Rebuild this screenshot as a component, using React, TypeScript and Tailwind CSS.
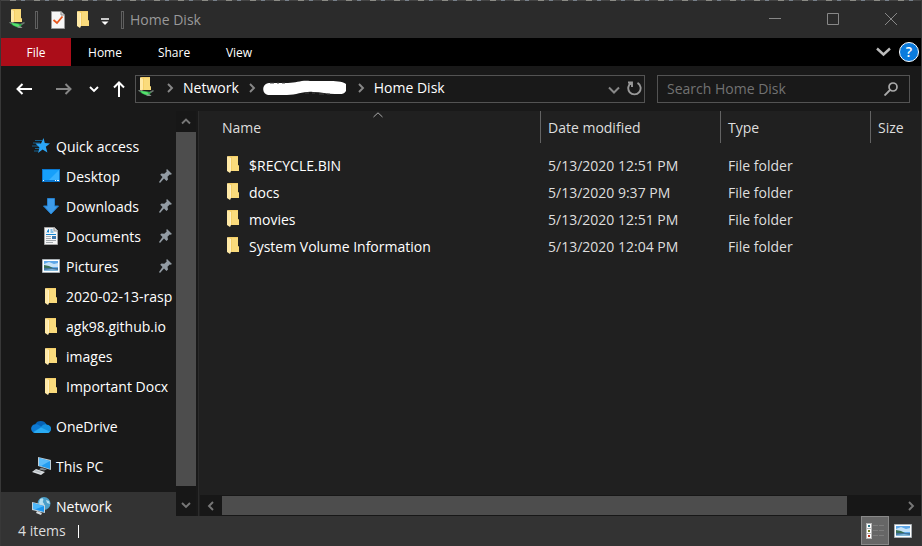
import type { ReactNode } from "react";

function Folder() {
  return (
    <svg width="12" height="17" viewBox="0 0 12 17" className="shrink-0" aria-hidden="true">
      <path d="M1 0h10v9l1 1v5H3z" fill="#f5cf68" />
      <path d="M5 1h6v8l1 1v5H5z" fill="#fadb7c" />
      <path d="M0 0l4 2v12l-1 3-3-2z" fill="#ffe9a6" />
      <path d="M3 2l1 0v12l-1 3z" fill="#fff1c4" />
    </svg>
  );
}

function SharedFolder() {
  return (
    <svg width="16" height="20" viewBox="0 0 16 20" className="shrink-0" aria-hidden="true">
      <path d="M3 0h9v9l1 1v3H4z" fill="#f5cf68" />
      <path d="M6 1h6v8l1 1v3H6z" fill="#fadb7c" />
      <path d="M2 0l3 2v10l-1 2-2-1z" fill="#ffe9a6" />
      <path d="M0 13l2 0 9 2 4-2 1 1-3 2H5L1 14.500z" fill="#6d7a72" />
      <path d="M2 14l9 .8 2 .7-1 1.700L10 19 6 17.500 3 16z" fill="#2ea84b" />
      <path d="M2.500 14l7 1.200 1.500 2.300-1.500.8-5-2z" fill="#55e36d" />
      <path d="M8 18l2-1 3.500 1.200-1 .8H10z" fill="#8a948e" />
    </svg>
  );
}

function Check() {
  return (
    <svg width="14" height="18" viewBox="0 0 14 18" aria-hidden="true">
      <path d="M.5.5h9.500l3.500 3.500v13.500H.5z" fill="#f7f7f7" stroke="#999" />
      <path d="M10 .5V4h3.500" fill="#ddd" stroke="#888" />
      <path d="M2.500 9l3.500 3 5.500-6.500" fill="none" stroke="#e8561c" strokeWidth="1.800" />
    </svg>
  );
}

function Star() {
  return (
    <svg width="18" height="16" viewBox="0 0 18 16" aria-hidden="true">
      <path d="M3 2.500h7M1 5h7M0 8h6M3 10.500h4M2 13h4" stroke="#14608f" />
      <path d="M11.500 0l1.300 5L18 5.500l-4.200 3.300 1.600 5.700-4.800-3L6 15l1.400-5.400L3.500 5.500H9z" fill="#2ba6f7" />
    </svg>
  );
}

function Desktop() {
  return (
    <svg width="18" height="14" viewBox="0 0 18 14" aria-hidden="true">
      <path d="M0 0h18v13H0z" fill="#0b78d0" />
      <path d="M1 1h16v10H1z" fill="#16a0fb" />
      <path d="M17 1v10H7z" fill="#38b2ff" />
      <path d="M1 11.500h1M13 11.500h1M15 11.500h2" stroke="#fff" />
    </svg>
  );
}

function Download() {
  return (
    <svg width="16" height="17" viewBox="0 0 16 17" aria-hidden="true">
      <path d="M4.500.5h7V8h4L8 16 .5 8h4z" fill="#3d9be9" stroke="#2480ce" />
    </svg>
  );
}

function Document() {
  return (
    <svg width="14" height="18" viewBox="0 0 14 18" aria-hidden="true">
      <path d="M.5.5h10l3 3v14H.5z" fill="#f5f6f7" stroke="#a5a5a5" />
      <path d="M10 .5V4h3.500" fill="#ddd" stroke="#999" />
      <path d="M3 5.500l1.500-3v3M6.500 3h2M6.500 5h3M2 7.500h10" fill="none" stroke="#1685cf" />
      <path d="M2 9.500h5M2 11.500h5M2 13.500h10M2 15.500h7" stroke="#a3a9ad" />
      <path d="M8 9h4v3H8z" fill="#3c78ae" />
    </svg>
  );
}

function Picture() {
  return (
    <svg width="18" height="14" viewBox="0 0 18 14" className="shrink-0" aria-hidden="true">
      <path d="M.5.5h17v13H.5z" fill="#fff" stroke="#a9b0b5" />
      <path d="M2 2h14v10H2z" fill="#5ea7e8" />
      <path d="M2 5l5-2 5 2 4-1v4H2z" fill="#c6e3f8" />
      <path d="M2 6l5 1 4 2h5v1H2z" fill="#3a7158" />
      <path d="M2 9h14v3H2z" fill="#41739b" />
      <path d="M2 11l8-1 6 1v1H2z" fill="#82b9dc" />
    </svg>
  );
}

function Cloud() {
  return (
    <svg width="20" height="13" viewBox="0 0 20 13" aria-hidden="true">
      <path d="M4 4.500A6.500 6.500 0 0 1 15.500 4.500L10 9z" fill="#0663b7" />
      <path d="M4.500 4.200c1.500 0 3 .4 4 1.200l7 4-11 3.600A4.400 4.400 0 0 1 4.500 4.200z" fill="#0d7ad4" />
      <path d="M10 7c2-3 4.500-3 6-2.300A4.100 4.100 0 0 1 16 13H4l-2-1z" fill="#1490df" />
      <path d="M10 7.500l9 4.200A4 4 0 0 1 16 13H4.500l-2-.8z" fill="#2aabf3" />
    </svg>
  );
}

function Computer() {
  return (
    <svg width="19" height="18" viewBox="0 0 19 18" aria-hidden="true">
      <path d="M6 0l13 3v10L6 9z" fill="#bfcdd6" />
      <path d="M7 1l11 3v8L7 8.500z" fill="#249df0" />
      <path d="M7 1l11 3-9 5-2-.5z" fill="#5bbcfa" />
      <path d="M9 10.500l6 2-3 1-5-1z" fill="#7f8a91" />
      <path d="M4 12l9 3-4 3-9-3z" fill="#d8dcdf" />
      <path d="M3 13l7 2-2 1-6-2z" fill="#b5bcc0" />
    </svg>
  );
}

function NetworkIcon() {
  return (
    <svg width="19" height="18" viewBox="0 0 19 18" aria-hidden="true">
      <circle cx="12" cy="6.500" r="6.500" fill="#4b9fc9" />
      <path d="M8 2c3-2 4 0 3 2s2 2 1 4-4 0-5-2zM14 3l3 1 1 3-3-1z" fill="#b5dfef" />
      <path d="M0 5l13 3v8L0 13z" fill="#c4d4dd" />
      <path d="M1 6l11 3v6L1 12z" fill="#1b94ec" />
      <path d="M1 6l11 3-8 3-3 0z" fill="#4db8fa" />
      <path d="M5 14l5 2-1 2-5-2z" fill="#d6dcdf" />
    </svg>
  );
}

function Pin() {
  return (
    <svg width="13" height="14" viewBox="0 0 13 14" className="mb-0.5 shrink-0" aria-hidden="true">
      <path d="M8 0l5 5-1.500.7-.8-.3-2.200 2.300.5 2.800L7.500 12 5 9.500 1 14l-1-1 3.500-5L1.200 5.700 2.500 4.500l2.800.2L7.700 2.400 7.300 1z" fill="#929ba3" />
    </svg>
  );
}

function Chevron({ d, className = "" }: { d: "up" | "down" | "left" | "right"; className?: string }) {
  const paths = { up: "M1 6.500l4-4 4 4", down: "M1 3l4 4 4-4", left: "M7 1L3 5l4 4", right: "M3 1l4 4-4 4" };
  return (
    <svg width="10" height="10" viewBox="0 0 10 10" className={"shrink-0 " + className} aria-hidden="true">
      <path d={paths[d]} fill="none" stroke="currentColor" strokeWidth="1.900" />
    </svg>
  );
}

function Arrow({ className }: { className: string }) {
  return (
    <svg width="16" height="12" viewBox="0 0 16 12" className={className} aria-hidden="true">
      <path d="M16 6H2M6.500 1l-5 5 5 5" fill="none" stroke="currentColor" strokeWidth="2" />
    </svg>
  );
}

type Item = { label: string; icon: ReactNode; pinned?: boolean };

const quickItems: Item[] = [
  { label: "Desktop", icon: <Desktop />, pinned: true },
  { label: "Downloads", icon: <Download />, pinned: true },
  { label: "Documents", icon: <Document />, pinned: true },
  { label: "Pictures", icon: <Picture />, pinned: true },
  { label: "2020-02-13-rasp", icon: <Folder /> },
  { label: "agk98.github.io", icon: <Folder /> },
  { label: "images", icon: <Folder /> },
  { label: "Important Docx", icon: <Folder /> },
];

const files = [
  { name: "$RECYCLE.BIN", date: "5/13/2020 12:51 PM" },
  { name: "docs", date: "5/13/2020 9:37 PM" },
  { name: "movies", date: "5/13/2020 12:51 PM" },
  { name: "System Volume Information", date: "5/13/2020 12:04 PM" },
];

function RootItem({ label, icon, selected = false }: { label: string; icon: ReactNode; selected?: boolean }) {
  return (
    <button className={"flex h-[30px] w-full shrink-0 items-center text-left " + (selected ? "bg-[#333]" : "")}>
      <span className="ml-[30px] flex w-5 shrink-0 justify-center pb-0.5">{icon}</span>
      <span className="ml-[5px] whitespace-nowrap">{label}</span>
    </button>
  );
}

function Sidebar() {
  return (
    <nav aria-label="Folders" className="flex w-[198px] shrink-0 border-r border-[#2b2b2b] bg-[#191919]">
      <div className="flex min-w-0 flex-1 flex-col overflow-hidden pt-[21px]">
        <RootItem label="Quick access" icon={<Star />} />
        {quickItems.map((item) => (
          <button key={item.label} className="flex h-[30px] w-full shrink-0 items-center pr-1 text-left">
            <span className="ml-10 flex w-5 shrink-0 justify-center pb-0.5">{item.icon}</span>
            <span className="ml-[5px] flex-1 whitespace-nowrap">{item.label}</span>
            {item.pinned && <Pin />}
          </button>
        ))}
        <div className="flex flex-col gap-[10px] pt-[10px]">
          <RootItem label="OneDrive" icon={<Cloud />} />
          <RootItem label="This PC" icon={<Computer />} />
          <RootItem label="Network" icon={<NetworkIcon />} selected />
        </div>
      </div>
      <div className="mr-[2px] flex w-5 shrink-0 flex-col bg-[#171717] text-[#777]">
        <button aria-label="Scroll up" className="flex h-[21px] items-center justify-center"><Chevron d="up" /></button>
        <div className="flex-1 bg-[#4d4d4d]" />
        <button aria-label="Scroll down" className="flex h-[30px] items-center justify-center pt-2"><Chevron d="down" /></button>
      </div>
    </nav>
  );
}

function Header({ label, sorted = false, last = false }: { label: string; sorted?: boolean; last?: boolean }) {
  return (
    <th className="p-0 align-top font-normal" aria-sort={sorted ? "ascending" : undefined}>
      <button className={"relative flex h-8 w-full items-center pt-0.5 text-left whitespace-nowrap text-[#dedede] " + (sorted ? "pl-[22px] " : "pl-[7px] ") + (last ? "" : "border-r border-[#636363]")}>
        {label}
        {sorted && (
          <svg width="10" height="6" viewBox="0 0 10 6" className="absolute top-px right-[157px]" aria-hidden="true">
            <path d="M.5 5L5 .8 9.500 5" fill="none" stroke="#aaa" />
          </svg>
        )}
      </button>
    </th>
  );
}

export default function App() {
  return (
    <div className="flex h-screen flex-col overflow-hidden border-x border-[#383838] bg-[#191919] font-['Open_Sans','Noto_Sans',sans-serif] text-sm text-white">
      <div className="h-px shrink-0 bg-[repeating-linear-gradient(90deg,#444_0_9px,#8b8b85_9px_15px,#444_15px_20px,#77808a_20px_24px)]" />
      <header className="flex h-[37px] shrink-0 items-center bg-[#2b2b2b]">
        <span className="ml-2 flex w-4 pb-0.5"><SharedFolder /></span>
        <span className="ml-[10px] h-[18px] w-[3px] border border-[#606060]" />
        <button aria-label="Properties" className="ml-[13px]"><Check /></button>
        <button aria-label="New folder" className="ml-3"><Folder /></button>
        <button aria-label="Customize toolbar" className="ml-3 pt-1">
          <svg width="8" height="8" viewBox="0 0 8 8" aria-hidden="true"><path d="M0 1h8" stroke="#fff" strokeWidth="1.500" /><path d="M.5 3.500h7L4 7z" fill="#fff" /></svg>
        </button>
        <span className="ml-3 h-[18px] w-[3px] border border-[#606060]" />
        <h1 className="ml-[6px] flex-1 text-[#999]">Home Disk</h1>
        <div className="flex gap-[46px] pr-6 pb-0.5 text-[#888]">
          <button aria-label="Minimize"><svg width="12" height="12" viewBox="0 0 12 12" aria-hidden="true"><path d="M0 5.500h12" stroke="currentColor" /></svg></button>
          <button aria-label="Maximize"><svg width="12" height="12" viewBox="0 0 12 12" aria-hidden="true"><path d="M.5.5h11v11H.5z" fill="none" stroke="currentColor" /></svg></button>
          <button aria-label="Close"><svg width="12" height="12" viewBox="0 0 12 12" aria-hidden="true"><path d="M0 0l12 12M12 0L0 12" stroke="currentColor" /></svg></button>
        </div>
      </header>
      <div className="flex h-7 shrink-0 items-center bg-black text-xs">
        <button className="h-full w-[70px] bg-[#ab0d19] pt-0.5">File</button>
        <button className="h-full w-[68px] pt-0.5">Home</button>
        <button className="h-full w-[70px] pt-0.5">Share</button>
        <button className="h-full w-[60px] pt-0.5">View</button>
        <button aria-label="Expand ribbon" className="mr-2 ml-auto text-[#bbb]">
          <svg width="15" height="10" viewBox="0 0 15 10" aria-hidden="true"><path d="M1 1.500l6.500 6 6.500-6" fill="none" stroke="currentColor" strokeWidth="2.400" /></svg>
        </button>
        <button aria-label="Help" className="mr-0.5 flex size-5 items-center justify-center rounded-full border border-white bg-[#0b7bdd] text-sm font-semibold">?</button>
      </div>
      <div className="flex h-[45px] shrink-0 items-center">
        <button aria-label="Back" className="ml-[15px]"><Arrow className="" /></button>
        <button aria-label="Forward" className="ml-6 text-[#868686]"><Arrow className="rotate-180" /></button>
        <button aria-label="Recent locations" className="ml-[17px]"><Chevron d="down" /></button>
        <button aria-label="Up" className="ml-[14px]">
          <svg width="12" height="16" viewBox="0 0 12 16" aria-hidden="true"><path d="M6 16V2M1 6.500l5-5 5 5" fill="none" stroke="#fff" strokeWidth="2" /></svg>
        </button>
        <div className="ml-[10px] flex h-7 min-w-0 flex-1 items-center border border-[#535353] pb-0.5">
          <span className="ml-[2px] flex w-4 pb-0.5"><SharedFolder /></span>
          <Chevron d="right" className="ml-[11px] text-[#888]" />
          <button className="ml-[8px]">Network</button>
          <Chevron d="right" className="ml-[8px] text-[#888]" />
          <button aria-label="Host" className="ml-[6px]">
            <svg width="84" height="16" viewBox="0 0 84 16" aria-hidden="true">
              <path d="M1 6C3 2 8 3 13 3l12 0C34 3 38 0 47 1h18c7 0 14 0 18 3v7c-2 4-6 3-11 3-8 0-14-2-22-2-9-1-16 3-26 3H5C1 14-1 10 1 6z" fill="#fff" />
              <path d="M7 3h4M14 3h2M19 3h3M42 13h4M49 13h3M56 14h5M64 14h3" stroke="#444" />
            </svg>
          </button>
          <Chevron d="right" className="ml-[9px] text-[#888]" />
          <button className="ml-[8px] whitespace-nowrap">Home Disk</button>
          <button aria-label="Previous locations" className="mr-[7px] ml-auto pt-1 text-[#888]">
            <svg width="12" height="8" viewBox="0 0 12 8" aria-hidden="true"><path d="M1 1.500l5 5 5-5" fill="none" stroke="currentColor" strokeWidth="2" /></svg>
          </button>
          <button aria-label="Refresh" className="mr-[2px] pt-0.5 text-[#999]">
            <svg width="15" height="15" viewBox="0 0 15 15" aria-hidden="true"><path d="M10.500 1.800a6.200 6.200 0 1 1-6.300.1M1 1.500h4v4.500" fill="none" stroke="currentColor" strokeWidth="1.900" /></svg>
          </button>
        </div>
        <label className="mr-[11px] ml-3 flex h-7 w-[253px] shrink-0 items-center border border-[#535353] pr-[11px] pl-[9px]">
          <input type="search" aria-label="Search Home Disk" placeholder="Search Home Disk" className="min-w-0 flex-1 bg-transparent outline-none placeholder:text-[#727272]" />
          <svg width="14" height="14" viewBox="0 0 14 14" aria-hidden="true"><circle cx="9" cy="5" r="4" fill="none" stroke="#aaa" strokeWidth="1.700" /><path d="M6 8l-5.500 5.500" stroke="#aaa" strokeWidth="1.900" /></svg>
        </label>
      </div>
      <div className="flex min-h-0 flex-1">
        <Sidebar />
        <main className="flex min-w-0 flex-1 flex-col bg-[#202020] pl-px">
          <div className="min-h-0 flex-1 overflow-hidden">
            <table className="w-full table-fixed border-collapse text-left">
              <colgroup>
                <col className="w-[341px]" />
                <col className="w-[180px]" />
                <col className="w-[150px]" />
                <col />
              </colgroup>
              <thead>
                <tr className="h-[41px]">
                  <Header label="Name" sorted />
                  <Header label="Date modified" />
                  <Header label="Type" />
                  <Header label="Size" last />
                </tr>
              </thead>
              <tbody>
                {files.map((file) => (
                  <tr key={file.name} className="h-[27px]">
                    <td className="p-0 pl-[27px]"><div className="flex items-center gap-[10px]"><span className="pb-0.5"><Folder /></span>{file.name}</div></td>
                    <td className="p-0 pl-[7px] text-[#dedede]">{file.date}</td>
                    <td className="p-0 pl-[7px] text-[#dedede]">File folder</td>
                    <td className="p-0" />
                  </tr>
                ))}
              </tbody>
            </table>
          </div>
          <div className="flex h-[21px] shrink-0 border-y border-[#171717] bg-[#171717] text-[#777]">
            <button aria-label="Scroll left" className="flex w-[22px] items-center justify-center"><Chevron d="left" /></button>
            <div className="flex-1 bg-[#4d4d4d]" />
            <button aria-label="Scroll right" className="flex w-[74px] items-center justify-end pr-[5px]"><Chevron d="right" /></button>
          </div>
        </main>
      </div>
      <footer className="flex h-[30px] shrink-0 items-center bg-[#333] text-[#dedede]">
        <span className="ml-[17px]">4 items</span>
        <span className="ml-3 h-[13px] w-px bg-white" />
        <button aria-label="Details view" className="ml-auto flex h-[29px] w-7 items-center justify-center self-start border border-[#888] bg-[#666]">
          <svg width="18" height="16" viewBox="0 0 18 16" aria-hidden="true">
            <path d="M0 0h6v16H0z" fill="#b5b5b5" />
            <path d="M1 1h4v4H1zM1 6h4v4H1zM1 11h4v4H1z" fill="#fff" />
            <path d="M2 2h2v2H2z" fill="#28788a" /><path d="M2 7h2v2H2z" fill="#737b20" /><path d="M2 12h2v2H2z" fill="#bd3518" />
            <path d="M7 2.500h5M13 2.500h5M7 7.500h5M13 7.500h5M7 12.500h5M13 12.500h5" stroke="#7c7c7c" />
          </svg>
        </button>
        <button aria-label="Large icons view" className="mr-[9px] ml-[5px]"><Picture /></button>
      </footer>
    </div>
  );
}
